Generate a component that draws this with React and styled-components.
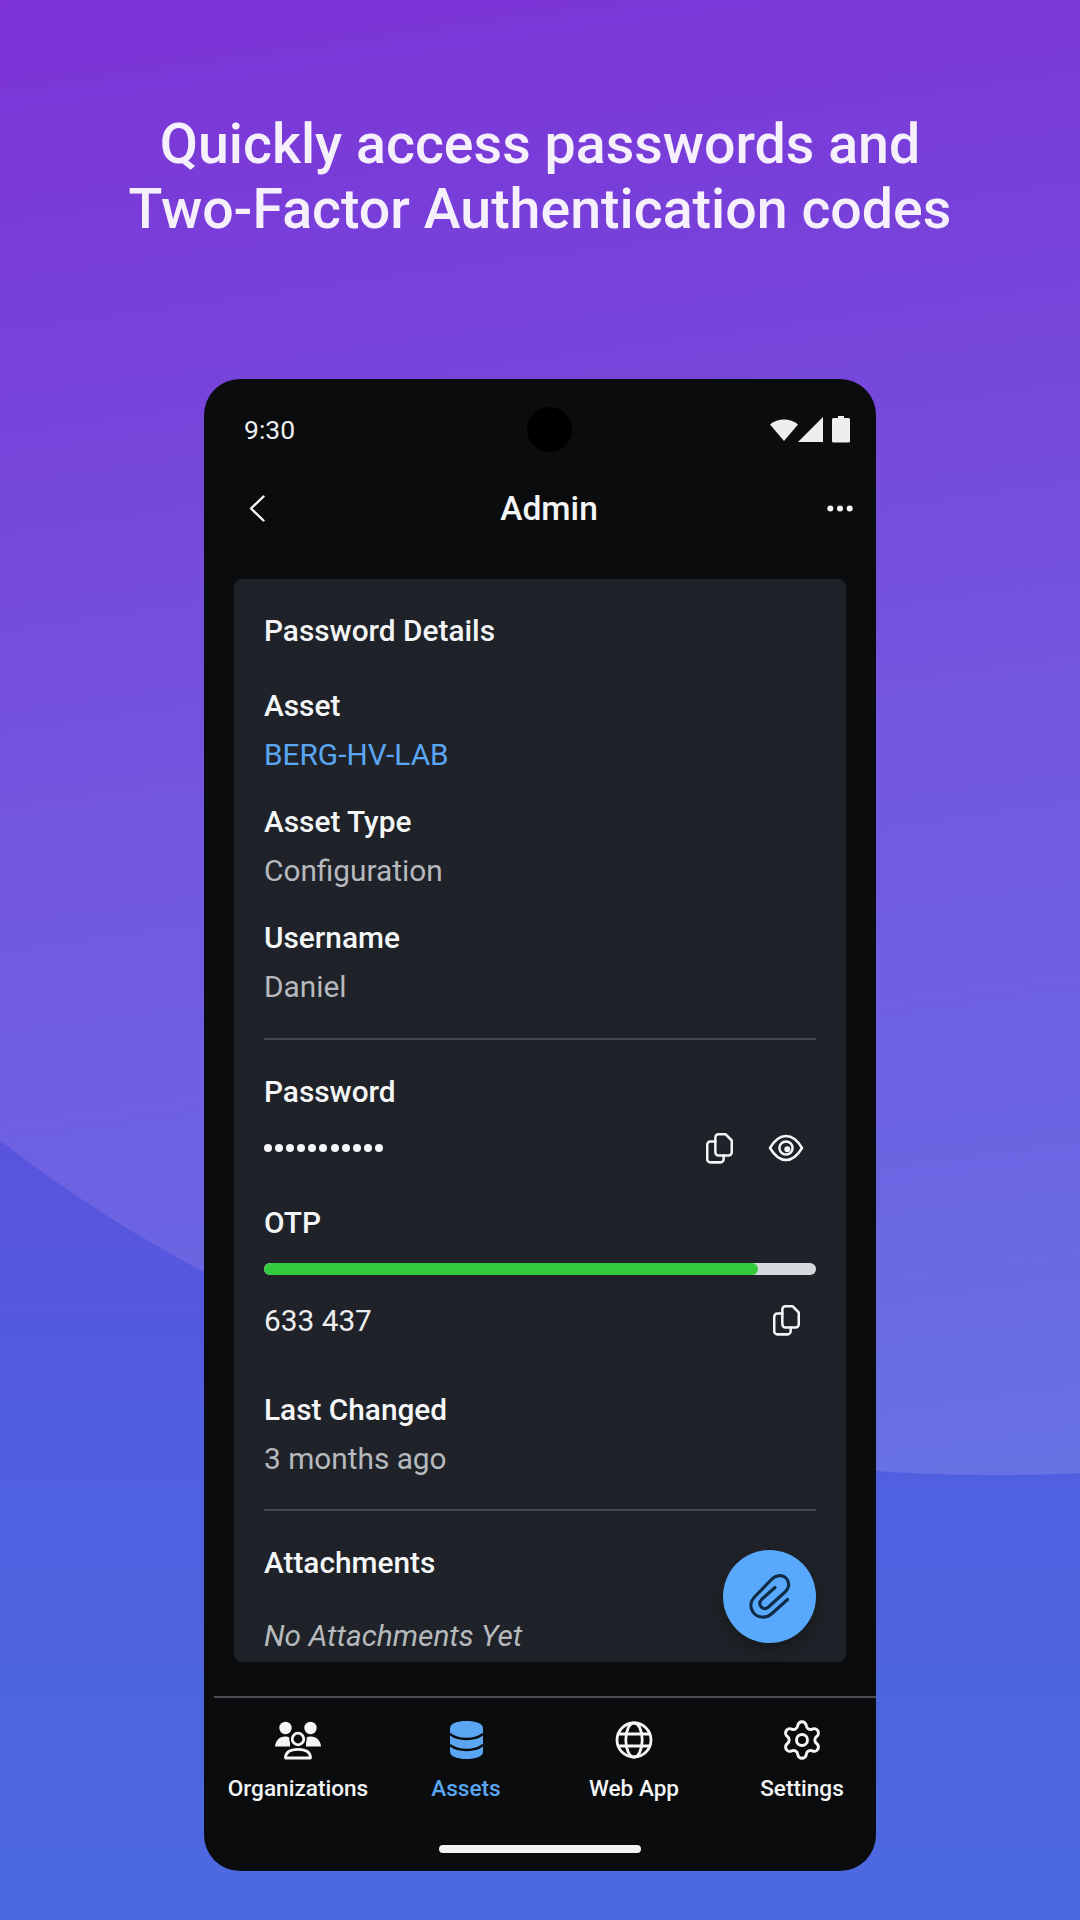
import React from "react";
import styled, { createGlobalStyle } from "styled-components";
import { Settings } from "lucide-react";

const Global = createGlobalStyle`
  html, body { margin: 0; padding: 0; background: #5b4fdc; }
  body { font-family: Roboto, "Liberation Sans", sans-serif; }
`;

const Page = styled.div`
  position: relative;
  width: 1080px;
  height: 1920px;
  overflow: hidden;
  background: linear-gradient(172deg, #7d33d6 0%, #7742da 18%, #7358df 42%, #6b65e2 62%, #6678e4 85%, #6080e4 100%);
  padding-top: 113px;
  box-sizing: border-box;
`;

const Backdrop = styled.svg`
  position: absolute;
  inset: 0;
  width: 1080px;
  height: 1920px;
`;

const Headline = styled.h1`
  position: relative;
  margin: 0;
  text-align: center;
  font-size: 55.5px;
  line-height: 64.5px;
  font-weight: 500;
  color: #f6f0fd;
`;

const Phone = styled.div`
  position: relative;
  margin: 137px 0 0 204px;
  width: 672px;
  height: 1492px;
  border-radius: 36px;
  background: #0a0c0e;
  overflow: hidden;
  color: #f4f5f6;
`;

const StatusBar = styled.div`
  position: relative;
  height: 100px;
  padding: 0 26px 0 40px;
  display: flex;
  align-items: center;
  justify-content: space-between;
  font-size: 26.5px;
  color: #eceef0;
`;

const Camera = styled.div`
  position: absolute;
  left: 323px;
  top: 28px;
  width: 45px;
  height: 45px;
  border-radius: 50%;
  background: #000;
`;

const Header = styled.div`
  height: 58px;
  padding: 0 23px 0 41px;
  display: grid;
  grid-template-columns: 1fr auto 1fr;
  align-items: center;
`;

const HeaderTitle = styled.div`
  font-size: 33.6px;
  font-weight: 470;
`;

const BackSlot = styled.div`
  margin-left: 4px;
  display: flex;
`;

const MoreSlot = styled.div`
  justify-self: end;
  display: flex;
`;

const Card = styled.div`
  position: relative;
  margin: 42px 30px 0;
  height: 1083px;
  padding: 32px 30px 0;
  box-sizing: border-box;
  background: #1f2329;
  border-radius: 8px;
  overflow: hidden;
`;

const CardTitle = styled.div`
  font-size: 29.8px;
  line-height: 40px;
  font-weight: 465;
  margin-bottom: 35px;
`;

const Field = styled.div`
  margin-bottom: ${(p) => p.$after ?? 27}px;
`;

const Label = styled.div`
  font-size: 29.8px;
  line-height: 40px;
  font-weight: 465;
  color: #f5f6f7;
`;

const Value = styled.div`
  margin-top: ${(p) => p.$top ?? 9}px;
  font-size: 29.8px;
  line-height: 40px;
  color: ${(p) => (p.$link ? "#5aa6f3" : "#b6b9bd")};
  font-style: ${(p) => (p.$italic ? "italic" : "normal")};
`;

const Divider = styled.div`
  height: 2px;
  background: #44474c;
  margin-bottom: ${(p) => p.$after ?? 32}px;
`;

const ValueRow = styled.div`
  display: flex;
  align-items: center;
  justify-content: space-between;
  height: 40px;
  margin-top: ${(p) => p.$top}px;
`;

const Dots = styled.div`
  display: flex;
  gap: 3.1px;
`;

const Dot = styled.span`
  width: 8px;
  height: 8px;
  border-radius: 50%;
  background: #f5f6f7;
`;

const Code = styled.div`
  font-size: 29.8px;
  color: #eceef0;
`;

const Actions = styled.div`
  display: flex;
  gap: 7px;
`;

const IconSlot = styled.div`
  width: 60px;
  height: 40px;
  display: flex;
  align-items: center;
  justify-content: center;
`;

const Track = styled.div`
  margin-top: 20px;
  height: 12px;
  border-radius: 6px;
  background: #d5d8dc;
  overflow: hidden;
`;

const Fill = styled.div`
  height: 100%;
  border-radius: 6px;
  background: #35cb3f;
`;

const Fab = styled.div`
  position: absolute;
  right: 30px;
  bottom: 19px;
  width: 93px;
  height: 93px;
  border-radius: 50%;
  background: #58a9fd;
  box-shadow: 0 8px 18px rgba(0, 0, 0, 0.3);
  display: flex;
  align-items: center;
  justify-content: center;
`;

const Nav = styled.nav`
  margin: 34px 0 0 10px;
  border-top: 2px solid #4a4c50;
  padding-top: 20px;
  display: grid;
  grid-template-columns: repeat(4, 168px);
`;

const NavItem = styled.div`
  display: flex;
  flex-direction: column;
  align-items: center;
  color: ${(p) => (p.$active ? "#5aa6f3" : "#f4f5f6")};
  font-size: 22.6px;
  line-height: 30px;
  font-weight: 465;
  white-space: nowrap;
`;

const NavIcon = styled.div`
  height: 44px;
  margin-bottom: 12px;
  display: flex;
  align-items: center;
  justify-content: center;
`;

const HomeBar = styled.div`
  margin: 41px auto 0;
  width: 202px;
  height: 8px;
  border-radius: 4px;
  background: #f2f3f4;
`;

const StatusIcons = () => (
  <svg width="80" height="27" viewBox="0 0 80 27" fill="#eceef0">
    <path d="M0 8.5 C4 5 9 3.5 14 3.5 S24 5 28 8.5 L14 25 Z" />
    <path d="M53 1 V26 H28 Z" />
    <path d="M62 3.5 a1.5 1.5 0 0 1 1.5 -1.5 h4.5 V0 h6 v2 h4.5 a1.5 1.5 0 0 1 1.5 1.5 V25 a1.5 1.5 0 0 1 -1.5 1.5 h-15 a1.5 1.5 0 0 1 -1.5 -1.5 Z" />
  </svg>
);

const BackIcon = () => (
  <svg width="16" height="27" viewBox="0 0 16 27" fill="none" stroke="#f4f5f6" strokeWidth="2.4" strokeLinecap="round" strokeLinejoin="round">
    <path d="M14.5 1.5 L2 13.5 L14.5 25.5" />
  </svg>
);

const MoreIcon = () => (
  <svg width="26" height="7" viewBox="0 0 26 7" fill="#f4f5f6">
    <circle cx="3.3" cy="3.5" r="3" />
    <circle cx="13" cy="3.5" r="3" />
    <circle cx="22.7" cy="3.5" r="3" />
  </svg>
);

const CopyIcon = () => (
  <svg width="27" height="31" viewBox="0 0 26 29" preserveAspectRatio="none" fill="none" stroke="#f4f5f6" strokeWidth="2.4" strokeLinejoin="round" strokeLinecap="round">
    <path d="M12 1.2 H19 L24.8 7 V18 A3 3 0 0 1 21.8 21 H12 A3 3 0 0 1 9 18 V4.2 A3 3 0 0 1 12 1.2 Z" />
    <path d="M9 8 H4.2 A3 3 0 0 0 1.2 11 V24.5 A3 3 0 0 0 4.2 27.5 H14 A3 3 0 0 0 17 24.5 V21" />
  </svg>
);

const EyeIcon = () => (
  <svg width="36" height="30" viewBox="0 0 36 30" fill="none" stroke="#f4f5f6" strokeWidth="2.5">
    <path d="M2 15 C7 6.5 12 3 18 3 S29 6.5 34 15 C29 23.5 24 27 18 27 S7 23.5 2 15 Z" strokeLinejoin="round" />
    <circle cx="18" cy="15" r="6.6" />
    <circle cx="19.3" cy="16.3" r="3" fill="#f4f5f6" stroke="none" />
  </svg>
);

const ClipIcon = () => (
  <svg width="60" height="60" viewBox="0 0 60 60" fill="none" stroke="#0e2a44" strokeWidth="3.1" strokeLinecap="round" strokeLinejoin="round">
    <path d="M47.5 32.5 L32 46.5 C26 52 17 51 13 45 C9.5 40 10.5 34 14.5 30 L31 13 C35 8.5 42 7 46 11 C50 15 49.5 21 45 25 L28.5 40 C25.5 42.5 22 42 20.5 39 C19 36.5 20 34 22 32 L35 20.5" />
  </svg>
);

const PeopleIcon = () => (
  <svg width="56" height="44" viewBox="4.5 5 56 44">
    <circle cx="20" cy="15" r="6.2" fill="#f4f5f6" />
    <circle cx="45" cy="15" r="6.2" fill="#f4f5f6" />
    <path d="M9.5 33.5 C10 27.5 14 23.5 19.5 23.5 C21.5 23.5 23 24 24.5 24.8 L24.5 33.5 Z" fill="#f4f5f6" />
    <path d="M55.5 33.5 C55 27.5 51 23.5 45.5 23.5 C43.5 23.5 42 24 40.5 24.8 L40.5 33.5 Z" fill="#f4f5f6" />
    <circle cx="32.5" cy="26" r="8.8" fill="#0a0c0e" />
    <circle cx="32.5" cy="26" r="5.8" fill="#0a0c0e" stroke="#f4f5f6" strokeWidth="2.8" />
    <path d="M20 45 C20 39 25 36.3 32.5 36.3 S45 39 45 45 Z" fill="none" stroke="#f4f5f6" strokeWidth="2.8" strokeLinejoin="round" />
  </svg>
);

const DbIcon = () => (
  <svg width="33" height="38" viewBox="0 0 33 38">
    <path d="M0 7 C0 2.5 7.5 0 16.5 0 S33 2.5 33 7 V31 C33 35.5 25 38 16.5 38 S0 35.5 0 31 Z" fill="#5aa6f3" />
    <path d="M0 13 C4 16.5 10 18 16.5 18 S29 16.5 33 13 M0 24 C4 27.5 10 29 16.5 29 S29 27.5 33 24" fill="none" stroke="#0a0c0e" strokeWidth="2.4" />
  </svg>
);

const GlobeIcon = () => (
  <svg width="38" height="38" viewBox="0 0 38 38" fill="none" stroke="#f4f5f6" strokeWidth="2.8">
    <circle cx="19" cy="19" r="17" />
    <ellipse cx="19" cy="19" rx="8.2" ry="17" />
    <path d="M3.5 13 H34.5 M3.5 25 H34.5" />
  </svg>
);

const items = [
  { label: "Organizations", icon: <PeopleIcon /> },
  { label: "Assets", icon: <DbIcon />, active: true },
  { label: "Web App", icon: <GlobeIcon /> },
  { label: "Settings", icon: <Settings size={44} strokeWidth={1.6} color="#f4f5f6" /> },
];

export default function App() {
  const otpProgress = 89.5;
  return (
    <Page>
      <Global />
      <Backdrop viewBox="0 0 1080 1920">
        <defs>
          <linearGradient id="lower" x1="0" y1="0" x2="0" y2="1">
            <stop offset="0" stopColor="#5953dd" />
            <stop offset="0.45" stopColor="#4f60e0" />
            <stop offset="1" stopColor="#4c6ae0" />
          </linearGradient>
        </defs>
        <path
          d="M0 1140 C70 1195 135 1235 204 1272 C400 1385 640 1465 876 1471 C950 1476 1020 1476 1080 1473 L1080 1920 L0 1920 Z"
          fill="url(#lower)"
        />
      </Backdrop>
      <Headline>
        Quickly access passwords and
        <br />
        Two-Factor Authentication codes
      </Headline>
      <Phone>
        <StatusBar>
          <span>9:30</span>
          <Camera />
          <StatusIcons />
        </StatusBar>
        <Header>
          <BackSlot>
            <BackIcon />
          </BackSlot>
          <HeaderTitle>Admin</HeaderTitle>
          <MoreSlot>
            <MoreIcon />
          </MoreSlot>
        </Header>
        <Card>
          <CardTitle>Password Details</CardTitle>
          <Field>
            <Label>Asset</Label>
            <Value $link>BERG-HV-LAB</Value>
          </Field>
          <Field>
            <Label>Asset Type</Label>
            <Value>Configuration</Value>
          </Field>
          <Field $after={31}>
            <Label>Username</Label>
            <Value>Daniel</Value>
          </Field>
          <Divider />
          <Field $after={35}>
            <Label>Password</Label>
            <ValueRow $top={16}>
              <Dots>
                {Array.from({ length: 11 }, (_, i) => (
                  <Dot key={i} />
                ))}
              </Dots>
              <Actions>
                <IconSlot>
                  <CopyIcon />
                </IconSlot>
                <IconSlot>
                  <EyeIcon />
                </IconSlot>
              </Actions>
            </ValueRow>
          </Field>
          <Field $after={50}>
            <Label>OTP</Label>
            <Track>
              <Fill style={{ width: `${otpProgress}%` }} />
            </Track>
            <ValueRow $top={25}>
              <Code>633 437</Code>
              <IconSlot>
                <CopyIcon />
              </IconSlot>
            </ValueRow>
          </Field>
          <Field $after={30}>
            <Label>Last Changed</Label>
            <Value>3 months ago</Value>
          </Field>
          <Divider />
          <Field>
            <Label>Attachments</Label>
            <Value $italic $top={33}>No Attachments Yet</Value>
          </Field>
          <Fab>
            <ClipIcon />
          </Fab>
        </Card>
        <Nav>
          {items.map((it) => (
            <NavItem key={it.label} $active={it.active}>
              <NavIcon>{it.icon}</NavIcon>
              {it.label}
            </NavItem>
          ))}
        </Nav>
        <HomeBar />
      </Phone>
    </Page>
  );
}
